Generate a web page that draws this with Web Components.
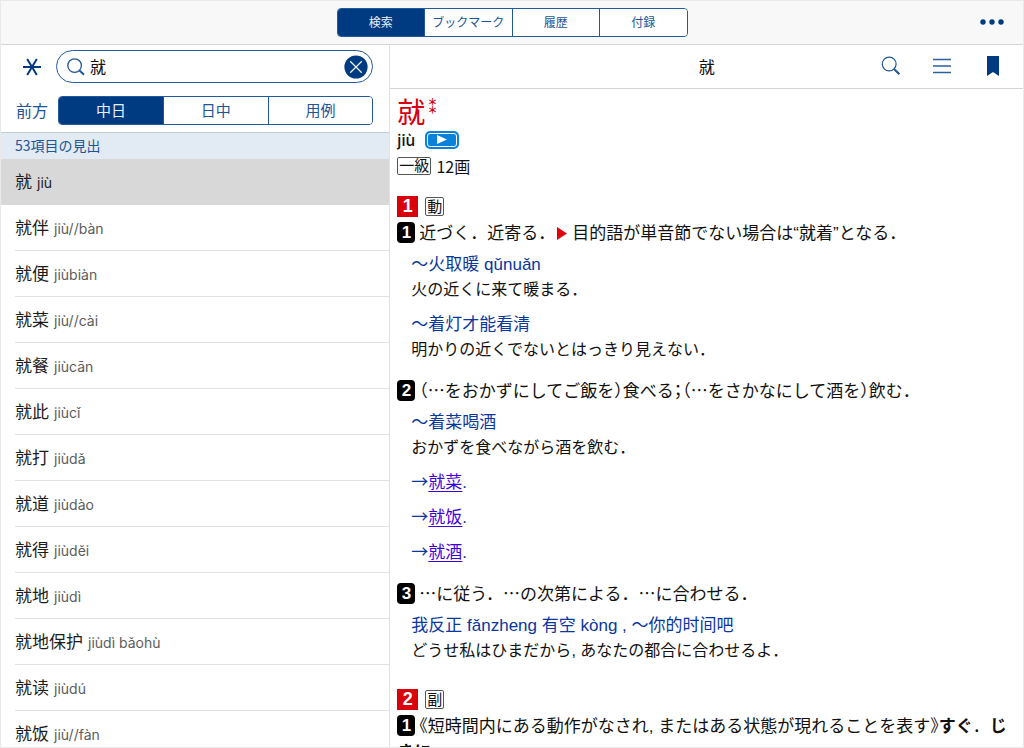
<!DOCTYPE html>
<html lang="ja">
<head>
<meta charset="utf-8">
<meta name="viewport" content="width=device-width, initial-scale=1">
<title>就 - 中日辞典</title>
<style>
  html, body { margin: 0; height: 100%; }
  body {
    --navy: #003a80;
    --line: #d3d5d8;
    --ja: "Noto Sans CJK JP", sans-serif;
    --zh: "Noto Sans CJK SC", sans-serif;
    --latin: "Liberation Sans", Arial, sans-serif;
    font-family: var(--ja);
    color: #111;
    background: #fff;
  }
</style>
</head>
<body>
<dict-app>
  <seg-control slot="tabs" label="メニュー" items="検索,ブックマーク,履歴,付録"></seg-control>
  <search-panel slot="side"></search-panel>
  <word-list slot="side" heading="53項目の見出">
    <word-item selected reading="jiù">就</word-item>
    <word-item reading="jiù//bàn">就伴</word-item>
    <word-item reading="jiùbiàn">就便</word-item>
    <word-item reading="jiù//cài">就菜</word-item>
    <word-item reading="jiùcān">就餐</word-item>
    <word-item reading="jiùcǐ">就此</word-item>
    <word-item reading="jiùdǎ">就打</word-item>
    <word-item reading="jiùdào">就道</word-item>
    <word-item reading="jiùděi">就得</word-item>
    <word-item reading="jiùdì">就地</word-item>
    <word-item reading="jiùdì bǎohù">就地保护</word-item>
    <word-item reading="jiùdú">就读</word-item>
    <word-item reading="jiù//fàn">就饭</word-item>
  </word-list>
  <entry-toolbar slot="main">就</entry-toolbar>
  <dict-entry slot="main">
    <entry-head reading="jiù" level="一級" strokes="12画">就</entry-head>
    <pos-group number="1" pos="動">
      <word-sense number="1">近づく．近寄る．<red-mark></red-mark>目的語が単音節でない場合は<latin-text>“</latin-text><zh-text>就着</zh-text><latin-text>”</latin-text>となる．
        <usage-example slot="examples" zh="〜火取暖"><latin-text slot="zh"> qǔnuǎn</latin-text>火の近くに来て暖まる．</usage-example>
        <usage-example slot="examples" zh="〜着灯才能看清">明かりの近くでないとはっきり見えない．</usage-example>
      </word-sense>
      <word-sense number="2"><half-punct>（</half-punct>…をおかずにしてご飯を<half-punct>）</half-punct>食べる<half-punct>；（</half-punct>…をさかなにして酒を<half-punct>）</half-punct>飲む．
        <usage-example slot="examples" zh="〜着菜喝酒">おかずを食べながら酒を飲む．</usage-example>
        <cross-ref slot="examples">就菜</cross-ref>
        <cross-ref slot="examples">就饭</cross-ref>
        <cross-ref slot="examples">就酒</cross-ref>
      </word-sense>
      <word-sense number="3">…に従う．…の次第による．…に合わせる．
        <usage-example slot="examples" zh="我反正"><latin-text slot="zh"> fǎnzheng </latin-text><zh-text slot="zh">有空</zh-text><latin-text slot="zh"> kòng , </latin-text><zh-text slot="zh">〜你的时间吧</zh-text>どうせ私はひまだから<latin-text>, </latin-text>あなたの都合に合わせるよ．</usage-example>
      </word-sense>
    </pos-group>
    <pos-group number="2" pos="副">
      <word-sense number="1"><half-punct>《</half-punct>短時間内にある動作がなされ<latin-text>, </latin-text>またはある状態が現れることを表す<half-punct>》</half-punct><b>すぐ</b>．<b>じきに</b></word-sense>
    </pos-group>
  </dict-entry>
</dict-app>

<script>
const define = (name, render) => customElements.define(name, class extends HTMLElement {
  constructor() {
    super();
    this.attachShadow({ mode: "open" });
  }
  connectedCallback() {
    if (this.shadowRoot.childNodes.length) return;
    const t = document.createElement("template");
    t.innerHTML = render(this);
    this.shadowRoot.append(t.content.cloneNode(true));
  }
});
const attr = (el, name) => el.getAttribute(name) || "";

define("dict-app", () => `
  <style>
    :host { display: flex; flex-direction: column; height: 100vh; box-sizing: border-box; border: 1px solid #e9e9e9; overflow: hidden; }
    header { display: grid; grid-template-columns: 1fr minmax(0, 351px) 1fr; align-items: center; height: 43px; flex: none; background: #f8f8f8; border-bottom: 1px solid var(--line); }
    header slot { display: block; grid-column: 2; }
    .more { justify-self: end; margin: 0 15px 2px 0; padding: 4px; border: 0; background: none; line-height: 0; }
    .panes { display: grid; grid-template-columns: calc(38% + 1px) minmax(0, 1fr); flex: 1; min-height: 0; }
    aside, main { display: flex; flex-direction: column; min-width: 0; min-height: 0; }
    aside { border-right: 1px solid #e2e2e2; }
  </style>
  <header>
    <slot name="tabs"></slot>
    <button class="more" type="button" aria-label="その他">
      <svg width="24" height="6" viewBox="0 0 24 6" fill="#003a80"><circle cx="3" cy="3" r="2.7"/><circle cx="12" cy="3" r="2.7"/><circle cx="21" cy="3" r="2.7"/></svg>
    </button>
  </header>
  <div class="panes">
    <aside><slot name="side"></slot></aside>
    <main><slot name="main"></slot></main>
  </div>`);

define("seg-control", el => `
  <style>
    :host { display: block; }
    div { display: flex; height: 29px; box-sizing: border-box; border: 1px solid #215a9c; border-radius: 4px; overflow: hidden; }
    button { flex: 1 1 0; min-width: 0; padding: 0 0 2px; border: 0; border-left: 1px solid #215a9c; background: #fff; color: #1d5596; font-family: var(--ja); font-size: var(--seg-size, 12px); line-height: 24px; white-space: nowrap; }
    button:first-child { border-left: 0; }
    button[aria-pressed="true"] { background: var(--navy); color: #e8f0f8; }
  </style>
  <div role="group" aria-label="${attr(el, "label")}">
    ${attr(el, "items").split(",").map((t, i) => `<button type="button" aria-pressed="${i === 0}">${t}</button>`).join("")}
  </div>`);

define("search-panel", () => `
  <style>
    :host { display: block; flex: none; padding: 5px 16px 7px 15px; border-bottom: 1px solid #c3ccd5; }
    .row { display: flex; align-items: center; }
    .row + .row { margin-top: 13px; }
    .wild { width: 31px; height: 32px; padding: 0; border: 0; background: none; line-height: 0; }
    label { flex: 1; min-width: 0; display: flex; align-items: center; height: 33px; box-sizing: border-box; margin-left: 9px; padding: 0 4px 0 10px; border: 1px solid #215a9c; border-radius: 17px; }
    input { flex: 1; min-width: 0; margin: 0 0 0 5px; padding: 0 0 2px; border: 0; outline: 0; background: none; color: #111; font: 16px/28px var(--ja); }
    .clear { width: 24px; height: 24px; padding: 0; border: 0; background: none; line-height: 0; }
    .mode { padding: 0 0 2px; border: 0; background: none; color: #1d5596; font: 16px/26px var(--ja); }
    seg-control { flex: 1; margin-left: 10px; --seg-size: 15px; }
  </style>
  <div class="row">
    <button class="wild" type="button" aria-label="ワイルドカード">
      <svg width="20" height="20" viewBox="0 0 20 20" stroke="#003a80" stroke-width="2" fill="none"><path d="M1 10H19M5.2 2L14.8 18M14.8 2L5.2 18"/></svg>
    </button>
    <label>
      <svg width="18" height="18" viewBox="0 0 18 18" fill="none" stroke="#1d5596"><circle cx="7.6" cy="7.6" r="6.8" stroke-width="1.3"/><path d="M12.5 12.5L17 16.8" stroke-width="1.9"/></svg>
      <input type="text" value="就" aria-label="検索語">
      <button class="clear" type="button" aria-label="消去">
        <svg width="24" height="24" viewBox="0 0 24 24"><circle cx="12" cy="12" r="11.6" fill="#003a80"/><path d="M6.2 6.2L17.8 17.8M17.8 6.2L6.2 17.8" stroke="#e8f0f8" stroke-width="1.3"/></svg>
      </button>
    </label>
  </div>
  <div class="row">
    <button class="mode" type="button">前方</button>
    <seg-control label="辞書" items="中日,日中,用例"></seg-control>
  </div>`);

define("word-list", el => `
  <style>
    :host { display: block; flex: 1; min-height: 0; overflow-y: auto; scrollbar-width: none; }
    h2 { margin: 0; padding: 0 14px 2px; background: #e2eaf3; color: #1d5596; font-size: 14px; line-height: 24px; font-weight: 400; }
  </style>
  <h2>${attr(el, "heading")}</h2>
  <div role="list"><slot></slot></div>`);

define("word-item", el => `
  <style>
    :host { display: block; }
    button { display: block; width: calc(100% - 14px); height: 46px; margin: 0 0 0 14px; padding: 0; border: 0; border-bottom: 1px solid #e2e2e2; background: none; text-align: left; white-space: nowrap; color: #1c1c1c; font: 17px/44px var(--zh); }
    :host([selected]) button { width: 100%; margin: 0; padding-left: 14px; background: #d8d8d8; border-color: #d8d8d8; }
    span { margin-left: 5px; font-family: Inter, sans-serif; font-size: 14px; color: #5c5c5c; }
    :host([selected]) span { color: #1c1c1c; }
  </style>
  <button type="button" lang="zh-Hans"><slot></slot><span>${attr(el, "reading")}</span></button>`);
document.querySelectorAll("word-item").forEach(w => w.setAttribute("role", "listitem"));

define("entry-toolbar", () => `
  <style>
    :host { display: grid; grid-template-columns: 1fr auto 1fr; align-items: center; flex: none; height: 43px; border-bottom: 1px solid var(--line); }
    h1 { grid-column: 2; margin: 0 0 2px; font-size: 16px; line-height: 24px; font-weight: 400; }
    div { display: flex; justify-content: flex-end; align-items: center; gap: 27px; margin-bottom: 2px; padding-right: 18px; }
    button { display: flex; justify-content: center; width: 24px; height: 24px; padding: 0; border: 0; background: none; align-items: center; }
  </style>
  <h1><slot></slot></h1>
  <div>
    <button type="button" aria-label="ページ内検索"><svg width="20" height="20" viewBox="0 0 20 20" fill="none" stroke="#1d5596"><circle cx="8.2" cy="8" r="6.9" stroke-width="1.2"/><path d="M13 13L18.4 18.2" stroke-width="2"/></svg></button>
    <button type="button" aria-label="目次"><svg width="20" height="20" viewBox="0 0 20 20" stroke="#2a62a0" stroke-width="1.3"><path d="M1 3.5H19M1 10H19M1 16.5H19"/></svg></button>
    <button type="button" aria-label="ブックマーク"><svg width="12" height="20" viewBox="0 0 12 20" fill="#003a80"><path d="M0 0H12V20L6 16L0 20Z"/></svg></button>
  </div>`);

define("dict-entry", () => `
  <style>
    :host { display: block; flex: 1; min-height: 0; box-sizing: border-box; padding: 5px 12px 16px 7px; overflow-y: auto; scrollbar-width: none; }
  </style>
  <article><slot></slot></article>`);

define("entry-head", el => `
  <style>
    :host { display: block; margin-bottom: 13px; }
    .word { display: flex; align-items: flex-start; color: #d7000f; font-size: 28px; line-height: 34px; }
    .stars { display: flex; flex-direction: column; margin: 4px 0 0 2px; font-size: 10px; font-weight: 700; line-height: 8px; }
    .sound { display: flex; align-items: center; gap: 10px; font: 500 16px/24px Inter, sans-serif; }
    .play { display: flex; align-items: center; justify-content: center; box-sizing: border-box; width: 34px; height: 18px; margin-bottom: 1px; padding: 0; border: 2px solid #0a82dc; border-radius: 5px; background: #0a82dc; box-shadow: inset 0 0 0 1px #fff; }
    .level { display: flex; align-items: center; gap: 5px; font-size: 16px; line-height: 28px; }
    .level span { padding: 0 1px 2px; border: 1px solid #555; border-radius: 2px; font-size: 15px; line-height: 14px; }
  </style>
  <div class="word"><slot></slot><span class="stars"><span>＊</span><span>＊</span></span></div>
  <div class="sound">${attr(el, "reading")}
    <button class="play" type="button" aria-label="発音を再生"><svg width="10" height="9" viewBox="0 0 10 9" fill="#fff"><path d="M0 0L10 4.5L0 9Z"/></svg></button>
  </div>
  <div class="level"><span>${attr(el, "level")}</span>${attr(el, "strokes")}</div>`);

define("pos-group", el => `
  <style>
    :host { display: block; margin-bottom: 25px; }
    .pos { display: flex; align-items: center; gap: 7px; height: 26px; }
    b { width: 21px; background: #d9000b; color: #fff; text-align: center; font: 700 18px/21px var(--latin); }
    .pos span { width: 17px; padding-bottom: 2px; border: 1px solid #555; border-radius: 2px; text-align: center; font-size: 15px; line-height: 15px; }
  </style>
  <div class="pos"><b>${attr(el, "number")}</b><span>${attr(el, "pos")}</span></div>
  <slot></slot>`);

define("word-sense", el => `
  <style>
    :host { display: block; font-size: 17px; }
    :host(:not(:first-child)) { margin-top: 17px; }
    p { margin: 0; line-height: 26px; }
    .no { display: inline-block; width: 18px; margin-right: 4px; border-radius: 4px; background: #000; color: #fff; text-align: center; vertical-align: 1px; font: 700 17px/21px var(--latin); }
    .ex { display: flex; flex-direction: column; gap: 10px; margin: 5px 0 0 14px; }
  </style>
  <p><span class="no">${attr(el, "number")}</span><slot></slot></p>
  <div class="ex"><slot name="examples"></slot></div>`);

define("usage-example", el => `
  <style>
    :host { display: block; font-size: 16px; line-height: 24px; }
    .zh { color: #0a36a0; font-family: var(--zh); font-size: 17px; line-height: 26px; }
  </style>
  <div class="zh" lang="zh-Hans">${attr(el, "zh")}<slot name="zh"></slot></div>
  <div><slot></slot></div>`);

define("cross-ref", () => `
  <style>
    :host { display: block; color: #0a36a0; font-size: 17px; line-height: 25px; }
    a { color: #3f00e0; font-family: var(--zh); line-height: 1; text-decoration: underline; text-underline-offset: 3px; text-decoration-thickness: 1px; }
    span { font-family: var(--latin); line-height: 1; }
  </style>
  →<a href="#" lang="zh-Hans"><slot></slot></a><span>.</span>`);

define("latin-text", () => `<style>:host { display: inline; font-family: var(--latin); line-height: 1; white-space: pre-wrap; }</style><slot></slot>`);
define("zh-text", () => `<style>:host { display: inline; font-family: var(--zh); line-height: 1; }</style><slot></slot>`);
define("half-punct", () => `<style>:host { display: inline; font-family: var(--ja); font-feature-settings: "halt"; }</style><slot></slot>`);
define("red-mark", () => `
  <style>
    :host { display: inline-block; width: 17px; line-height: 1; }
    svg { margin-left: 2px; vertical-align: -1px; }
  </style>
  <svg width="10" height="13" viewBox="0 0 10 13" fill="#e00010"><path d="M0 0L10 6.5L0 13Z"/></svg>`);
</script>
</body>
</html>
